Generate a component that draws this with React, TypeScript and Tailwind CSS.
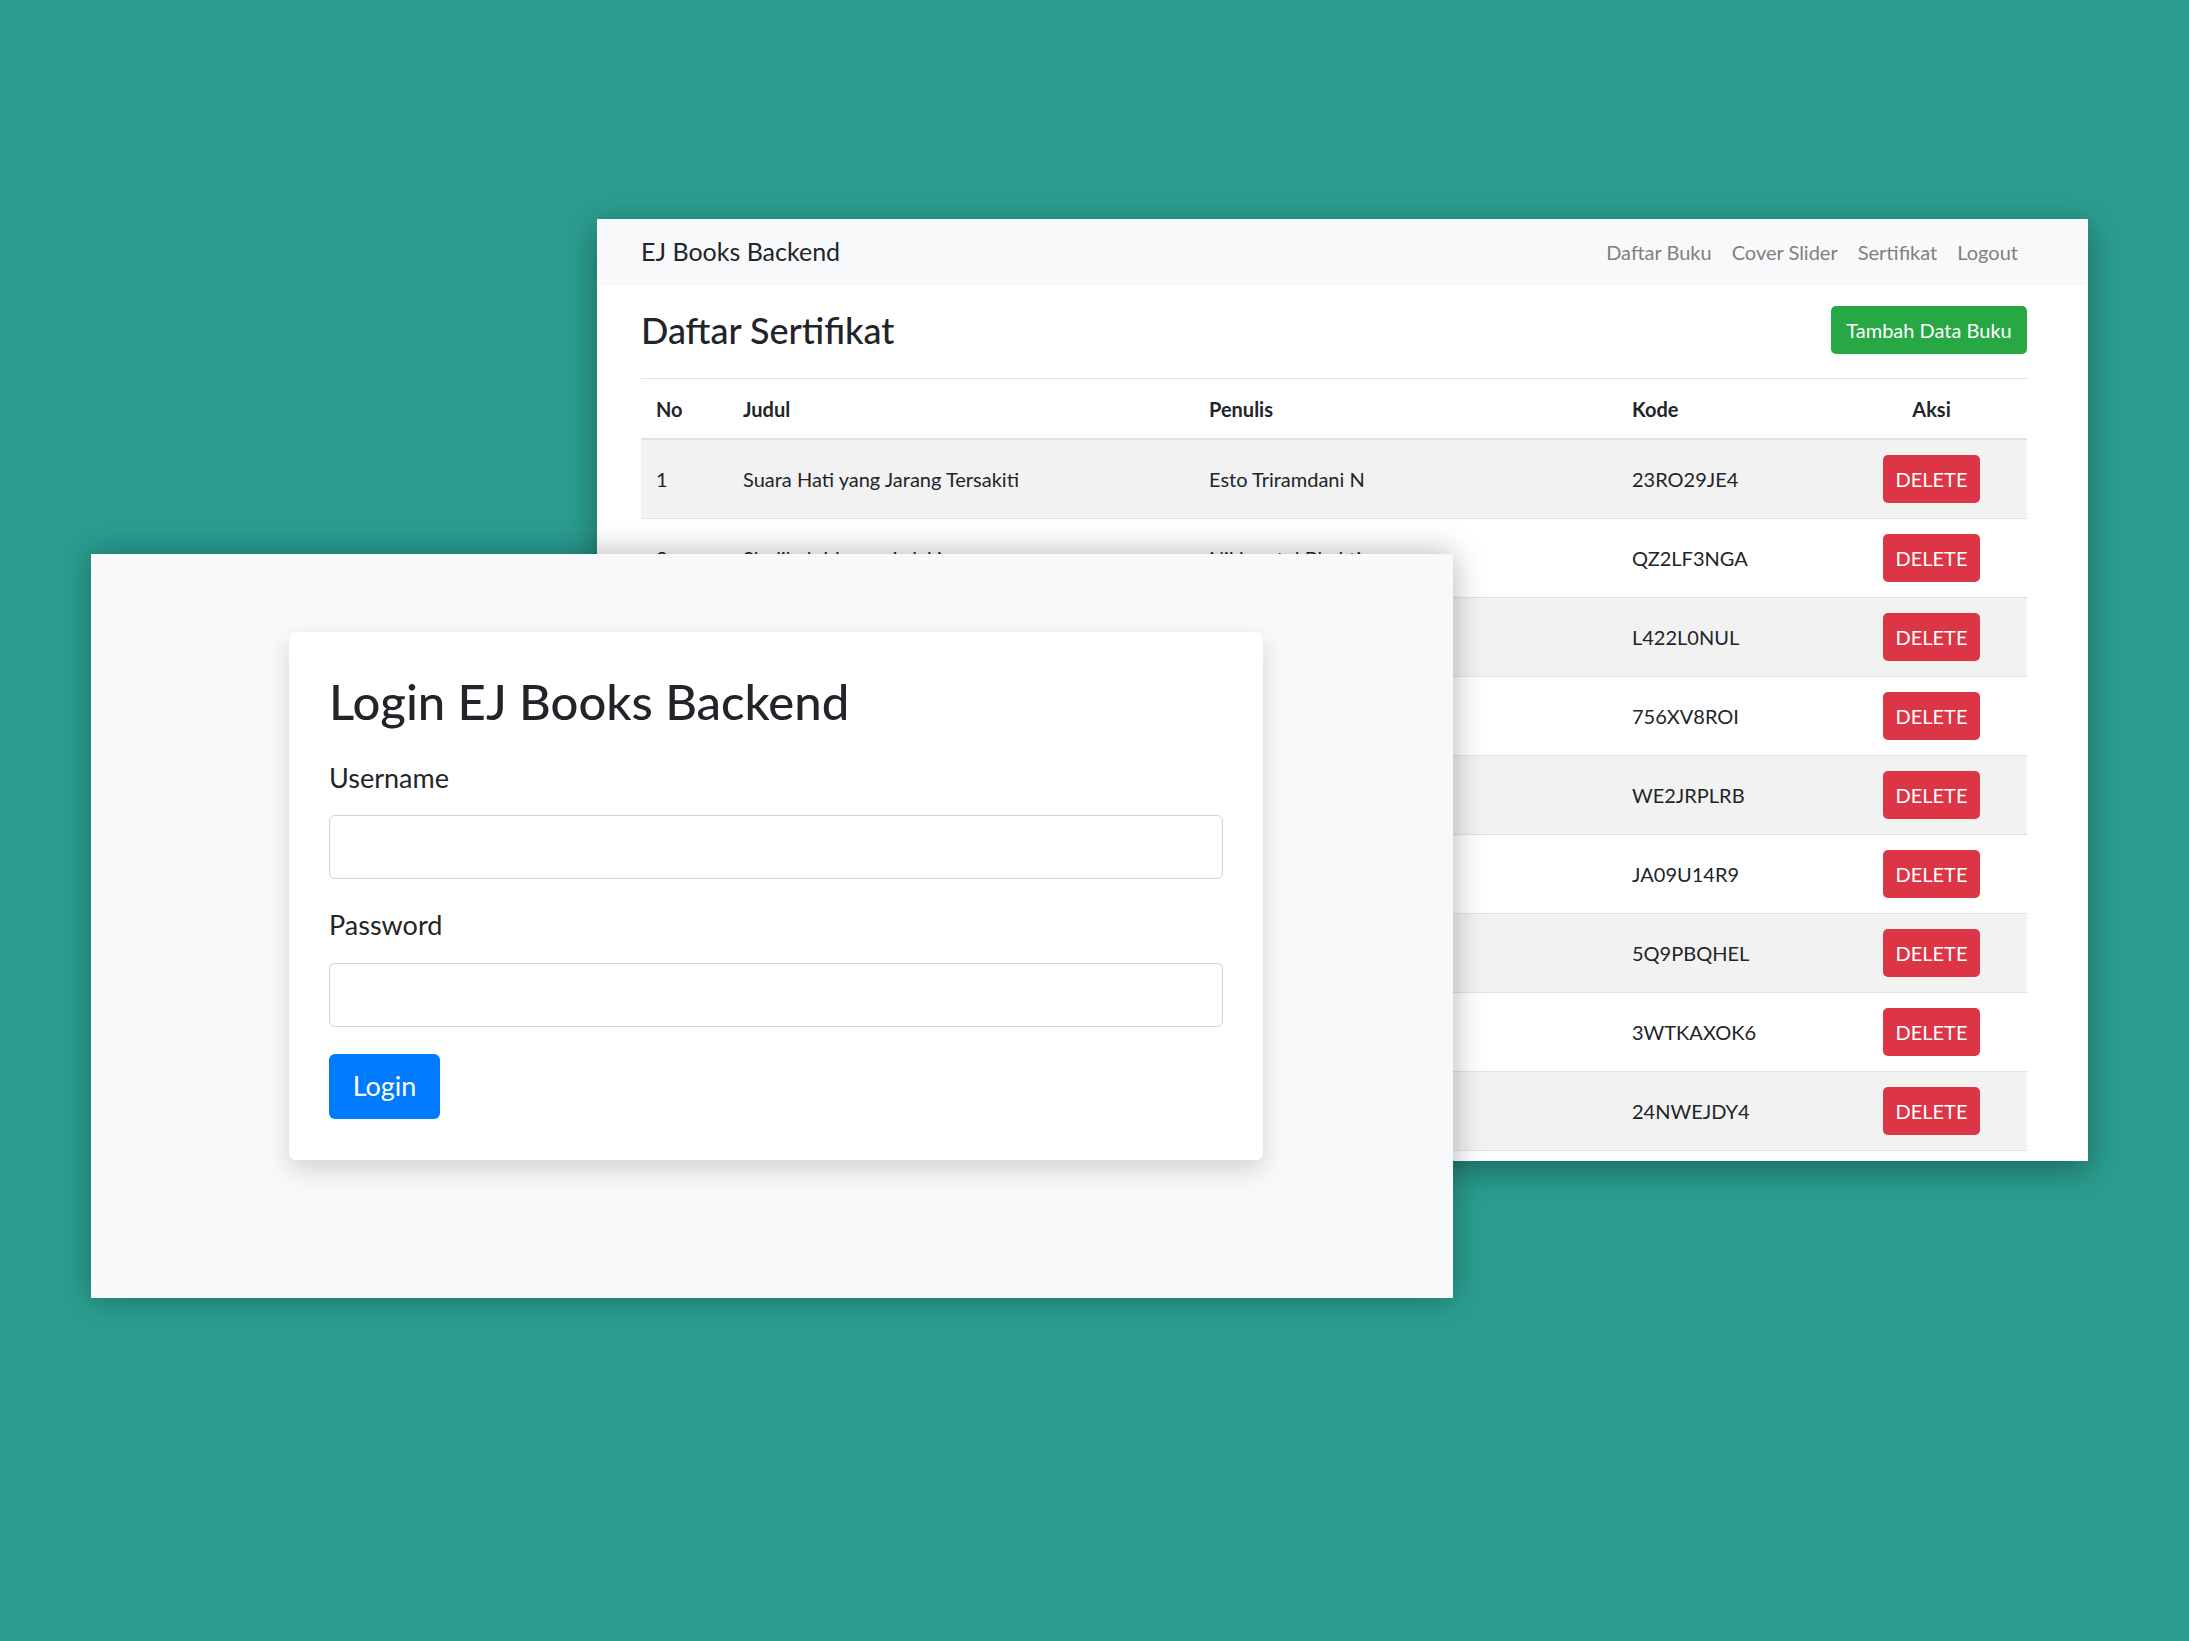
import React from "react";

const rows = [
  { no: 1, judul: "Suara Hati yang Jarang Tersakiti", penulis: "Esto Triramdani N", kode: "23RO29JE4" },
  { no: 2, judul: "Sholihah Idaman Lelaki", penulis: "Nikhmatul Bhakti", kode: "QZ2LF3NGA" },
  { no: 3, judul: "Menanti Senja di Ujung Kota", penulis: "Rahmawati Kusumawardani", kode: "L422L0NUL" },
  { no: 4, judul: "Langkah Kecil Menuju Surga", penulis: "Dewi Anggraini", kode: "756XV8ROI" },
  { no: 5, judul: "Catatan Seorang Perantau", penulis: "Ahmad Fauzi", kode: "WE2JRPLRB" },
  { no: 6, judul: "Rindu yang Tak Pernah Usai", penulis: "Siti Nurhaliza", kode: "JA09U14R9" },
  { no: 7, judul: "Kisah di Balik Hujan", penulis: "Budi Santoso", kode: "5Q9PBQHEL" },
  { no: 8, judul: "Secangkir Kopi dan Puisi", penulis: "Rina Marlina", kode: "3WTKAXOK6" },
  { no: 9, judul: "Jejak Langkah Sang Pemimpi", penulis: "Fajar Pratama", kode: "24NWEJDY4" },
];

const font = { fontFamily: "Lato, 'Noto Sans', sans-serif" };

function AdminWindow() {
  return (
    <div className="absolute left-[597px] top-[219px] w-[1491px] h-[942px] bg-white overflow-hidden shadow-[0_8px_30px_rgba(0,0,0,0.35)]">
      <nav className="h-[67px] bg-[#f8f9fa] flex items-center justify-between pl-[44px] pr-[60px]">
        <span className="text-[25px] text-[#212529] -mt-[2px]">EJ Books Backend</span>
        <div className="flex text-[20px] text-[#808080] -mt-[2px]">
          {["Daftar Buku", "Cover Slider", "Sertifikat", "Logout"].map((l) => (
            <span key={l} className="px-[10px]">{l}</span>
          ))}
        </div>
      </nav>
      <div className="pl-[44px] pr-[61px]">
        <div className="flex items-center justify-between mt-[20px] h-[48px]">
          <h2 className="text-[36px] font-medium text-[#212529] leading-none">Daftar Sertifikat</h2>
          <button className="w-[196px] h-[48px] rounded-[5px] bg-[#28a745] text-white text-[20px]">Tambah Data Buku</button>
        </div>
        <div className="mt-[24px] text-[20px] text-[#212529]">
          <div className="grid grid-cols-[87px_466px_423px_219px_191px] h-[62px] items-center border-t border-[#dee2e6] border-b-2 font-bold">
            <div className="pl-[15px]">No</div>
            <div className="pl-[15px]">Judul</div>
            <div className="pl-[15px]">Penulis</div>
            <div className="pl-[15px]">Kode</div>
            <div className="text-center">Aksi</div>
          </div>
          {rows.map((r, i) => (
            <div
              key={r.no}
              className={`grid grid-cols-[87px_466px_423px_219px_191px] h-[79px] items-center border-b border-[#dee2e6] ${i % 2 === 0 ? "bg-[#f2f2f2]" : "bg-white"}`}
            >
              <div className="pl-[15px]">{r.no}</div>
              <div className="pl-[15px]">{r.judul}</div>
              <div className="pl-[15px]">{r.penulis}</div>
              <div className="pl-[15px]">{r.kode}</div>
              <div className="flex justify-center">
                <button className="w-[97px] h-[48px] rounded-[5px] bg-[#dc3545] text-white text-[20px]">DELETE</button>
              </div>
            </div>
          ))}
        </div>
      </div>
    </div>
  );
}

function LoginWindow() {
  return (
    <div className="absolute left-[91px] top-[554px] w-[1362px] h-[744px] bg-[#f8f9fa] shadow-[0_0_30px_rgba(0,0,0,0.3)] pl-[198px] pt-[78px]">
      <div className="w-[974px] bg-white rounded-[6px] shadow-[0_10px_24px_rgba(0,0,0,0.15)] px-[40px] pt-[40px] pb-[41px]">
        <h1 className="text-[49px] leading-[1.2] font-medium text-[#212529]">Login EJ Books Backend</h1>
        <div className="mt-[27px] text-[27px] leading-[1.5] text-[#212529]">Username</div>
        <input className="mt-[17px] block w-[894px] h-[64px] border-[1.5px] border-[#ced4da] rounded-[6px] bg-white outline-none" />
        <div className="mt-[26px] text-[27px] leading-[1.5] text-[#212529]">Password</div>
        <input type="password" className="mt-[17px] block w-[894px] h-[64px] border-[1.5px] border-[#ced4da] rounded-[6px] bg-white outline-none" />
        <button className="mt-[27px] w-[111px] h-[65px] rounded-[6px] bg-[#007bff] text-white text-[27px]">Login</button>
      </div>
    </div>
  );
}

export default function App() {
  return (
    <div className="relative w-[2189px] h-[1641px] bg-[#2a9d8e] overflow-hidden" style={font}>
      <AdminWindow />
      <LoginWindow />
    </div>
  );
}
